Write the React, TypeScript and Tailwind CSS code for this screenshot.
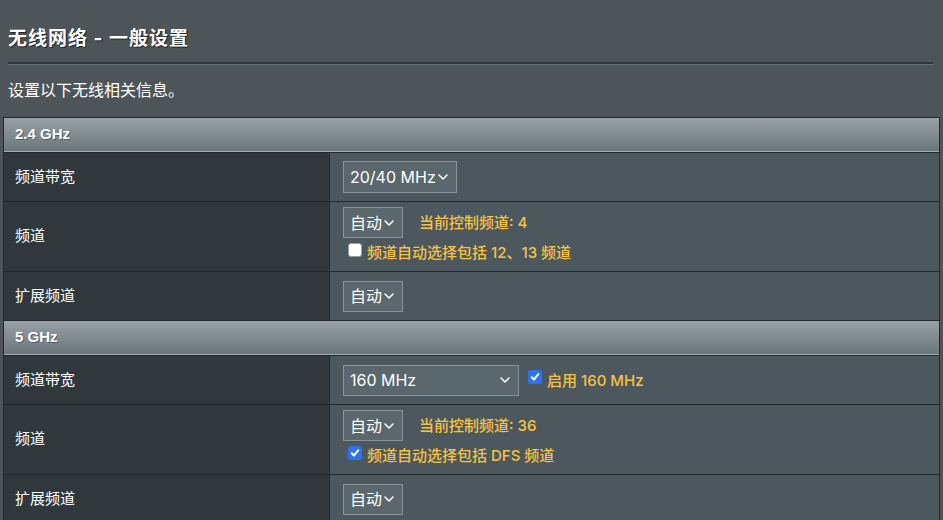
import React from "react";

const cjk = "font-['Inter','Noto_Sans_CJK_SC',sans-serif]";

function Chevron() {
  return (
    <svg width="10" height="6" viewBox="0 0 10 6" className="shrink-0" aria-hidden>
      <path d="M1 1l4 4 4-4" fill="none" stroke="currentColor" strokeWidth="1.5" strokeLinecap="round" strokeLinejoin="round" />
    </svg>
  );
}

function Select({ value, className }: { value: string; className: string }) {
  return (
    <div
      className={`flex h-[31px] shrink-0 items-center justify-between border border-[#8a9397] bg-[#5a676c] pl-[6px] pr-[8px] text-[16px] text-white ${className}`}
    >
      <span>{value}</span>
      <Chevron />
    </div>
  );
}

function Checkbox({ checked }: { checked?: boolean }) {
  if (checked) {
    return (
      <span className="flex h-[14px] w-[14px] shrink-0 items-center justify-center rounded-[3px] bg-[#2f72ee]">
        <svg width="10" height="10" viewBox="0 0 10 10" aria-hidden>
          <path d="M1.8 5.2l2.2 2.3 4.3-5.3" fill="none" stroke="#fff" strokeWidth="2" strokeLinecap="round" strokeLinejoin="round" />
        </svg>
      </span>
    );
  }
  return <span className="block h-[14px] w-[14px] shrink-0 rounded-[3px] border border-[#9aa0a3] bg-white" />;
}

function Hint({ children }: { children: React.ReactNode }) {
  return <span className="text-[15px] font-medium text-[#f6c344]">{children}</span>;
}

function Row({ label, tall, children }: { label: string; tall?: boolean; children: React.ReactNode }) {
  return (
    <div className={`flex border-t border-[#22292c] ${tall ? "h-[70px]" : "h-[49px]"}`}>
      <div className="flex w-[326px] shrink-0 items-center border-r border-[#22292c] bg-[#30383b] pl-[11px] text-[15px] text-white">
        {label}
      </div>
      <div className="flex-1 bg-[#4c585d] pl-[13px]">{children}</div>
    </div>
  );
}

function Header({ title }: { title: string }) {
  return (
    <div className="flex h-[35px] items-center border-t border-b border-t-[#22292c] border-b-[#a3acb0] bg-gradient-to-b from-[#97a1a6] to-[#6b767b] pl-[11px] font-['Liberation_Sans',sans-serif] text-[15px] font-bold text-white [text-shadow:1px_1px_0_rgba(0,0,0,0.35)]">
      {title}
    </div>
  );
}

function ChannelCell({ current, extra, checked }: { current: string; extra: string; checked?: boolean }) {
  return (
    <div className="flex flex-col pt-[5px]">
      <div className="flex items-center">
        <Select value="自动" className="w-[60px]" />
        <span className="ml-[16px]">
          <Hint>当前控制频道: {current}</Hint>
        </span>
      </div>
      <div className="mt-[5px] flex h-[20px] items-start">
        <span className="ml-[5px] block">
          <Checkbox checked={checked} />
        </span>
        <span className="ml-[5px] -mt-[1px] leading-[20px]">
          <Hint>{extra}</Hint>
        </span>
      </div>
    </div>
  );
}

function CenterCell({ children }: { children: React.ReactNode }) {
  return <div className="flex h-full items-center">{children}</div>;
}

export default function App() {
  return (
    <div className={`h-[520px] w-[943px] overflow-hidden bg-[#4d5558] ${cjk}`}>
      <div className="px-2 pt-[25px]">
        <h1 className="text-[19px] font-bold leading-[27px] tracking-[1px] text-white [text-shadow:1px_1px_1px_#1c2224]">
          无线网络 - 一般设置
        </h1>
        <div className="mt-[10px] w-[925px] border-t-2 border-b border-t-[#30383b] border-b-[#637076]" />
        <p className="mt-[13px] text-[16px] leading-[24px] text-white">设置以下无线相关信息。</p>
      </div>

      <div className="ml-[3px] mt-[15px] w-[937px] border-x border-[#22292c]">
        <Header title="2.4 GHz" />
        <Row label="频道带宽">
          <CenterCell>
            <Select value="20/40 MHz" className="h-[32px] w-[114px]" />
          </CenterCell>
        </Row>
        <Row label="频道" tall>
          <ChannelCell current="4" extra="频道自动选择包括 12、13 频道" />
        </Row>
        <Row label="扩展频道">
          <CenterCell>
            <Select value="自动" className="w-[60px]" />
          </CenterCell>
        </Row>

        <Header title="5 GHz" />
        <Row label="频道带宽">
          <CenterCell>
            <Select value="160 MHz" className="w-[176px]" />
            <span className="mb-[7px] ml-[9px]">
              <Checkbox checked />
            </span>
            <span className="ml-[5px]">
              <Hint>启用 160 MHz</Hint>
            </span>
          </CenterCell>
        </Row>
        <Row label="频道" tall>
          <ChannelCell current="36" extra="频道自动选择包括 DFS 频道" checked />
        </Row>
        <Row label="扩展频道">
          <CenterCell>
            <Select value="自动" className="w-[60px]" />
          </CenterCell>
        </Row>
      </div>
    </div>
  );
}
